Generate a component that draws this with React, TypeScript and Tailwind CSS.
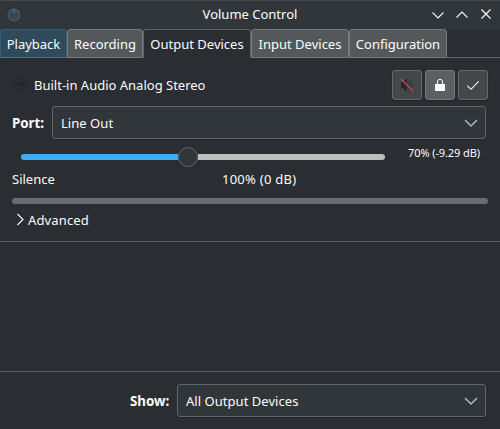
import type { ReactNode } from "react";

type TabKind = "hover" | "idle" | "active";

const tabStyles: Record<TabKind, string> = {
  hover: "bg-[#2f4a5a] border-[#336079] border-b-[#4f7486]",
  idle: "bg-[#54585b] border-[#777a7d]",
  active: "bg-[#2a2d32] border-[#5f6366] border-b-[#2a2d32]",
};

function Tab({ kind, width, children }: { kind: TabKind; width: string; children: ReactNode }) {
  return (
    <button
      className={`h-[29px] shrink-0 rounded-t-[3px] border text-center whitespace-nowrap ${width} ${tabStyles[kind]}`}
    >
      {children}
    </button>
  );
}

function ToolButton({ lit = false, children }: { lit?: boolean; children: ReactNode }) {
  return (
    <button
      className={`flex size-[30px] items-center justify-center rounded-[3px] border shadow-[0_1px_1px_rgba(0,0,0,0.25)] ${
        lit ? "border-[#74787a] bg-[#5c6063]" : "border-[#65696b] bg-[#43474a]"
      }`}
    >
      {children}
    </button>
  );
}

function Combo({ width, children }: { width: string; children: ReactNode }) {
  return (
    <div
      className={`flex h-[33px] items-center justify-between rounded-[3px] border border-[#616669] bg-[#31363a] pr-[7px] pl-2 shadow-[0_1px_1px_rgba(0,0,0,0.2)] ${width}`}
    >
      <span className="tracking-[0.04px]">{children}</span>
      <svg width="14" height="10" viewBox="0 0 14 10" fill="none" stroke="#b4b7b9" strokeWidth="1.5">
        <path d="M1 2l6 6 6-6" />
      </svg>
    </div>
  );
}

export default function App() {
  return (
    <div className="flex h-[429px] w-[500px] flex-col overflow-hidden bg-[#2a2d32] font-['Noto_Sans',sans-serif] text-[13px] leading-[18px] text-[#fcfcfc]">
      <header className="grid h-[29px] shrink-0 grid-cols-[1fr_auto_1fr] items-center border-t border-[#41484f] bg-[#31363b] pr-[8px] pl-[6px]">
        <svg className="-mt-px" width="16" height="16" viewBox="0 0 16 16">
          <circle cx="8" cy="8" r="7.7" fill="#262c33" />
          <circle cx="8" cy="8" r="6.7" fill="#4b5966" />
          <circle cx="8" cy="8.2" r="5.4" fill="#3a4651" />
          <path d="M8 2v4" stroke="#397da5" strokeWidth="1.2" />
        </svg>
        <h1 className="-mt-[2px] pl-[2px] font-normal">Volume Control</h1>
        <div className="flex justify-end gap-3">
          <svg width="12" height="12" viewBox="0 0 12 12" fill="none" stroke="#fcfcfc" strokeWidth="1.1">
            <path d="M.5 3.500L6 9l5.500-5.500" />
          </svg>
          <svg width="12" height="12" viewBox="0 0 12 12" fill="none" stroke="#fcfcfc" strokeWidth="1.1">
            <path d="M.5 8.500L6 3l5.500 5.500" />
          </svg>
          <svg className="-mt-px" width="12" height="12" viewBox="0 0 12 12" fill="none" stroke="#fcfcfc" strokeWidth="1.1">
            <path d="M1.500 1.500l9 9m0-9l-9 9" />
          </svg>
        </div>
      </header>

      <nav className="flex h-[29px] shrink-0">
        <Tab kind="hover" width="w-[67px]">Playback</Tab>
        <Tab kind="idle" width="w-[76px]">Recording</Tab>
        <Tab kind="active" width="w-[108px]">Output Devices</Tab>
        <Tab kind="idle" width="w-[98px]">Input Devices</Tab>
        <Tab kind="idle" width="w-[98px]">Configuration</Tab>
        <div className="flex-1 border-b border-[#616568]" />
      </nav>

      <main className="h-[184px] shrink-0 border-b border-[#5b5f62] px-3 pt-3">
        <div className="flex h-[30px] items-center">
          <svg width="16" height="16" viewBox="0 0 16 16" fill="none" stroke="#232629">
            <path d="M1.500 2.500h13v10h-13zM1.500 12v2" opacity=".7" />
            <path d="M3 7.500h4M5 5.500v4" />
            <path d="M10 4.500l3 3-3 3-3-3z" fill="#232629" stroke="none" />
          </svg>
          <span className="ml-[6px] flex-1">Built-in Audio Analog Stereo</span>
          <div className="flex gap-[3px]">
            <ToolButton>
              <svg width="16" height="16" viewBox="0 0 16 16" fill="none">
                <path d="M2 5h2l4-4v14l-4-4H2z" fill="#25282b" />
                <path d="M9 5.500q2 2.500 0 5M10 3q4 5 0 10" stroke="#2f3336" />
                <path d="M11.500 2q5 6 0 12" stroke="#3a3e41" />
                <path d="M2 2l12 12" stroke="#da4453" strokeWidth="1.3" />
              </svg>
            </ToolButton>
            <ToolButton lit>
              <svg width="16" height="16" viewBox="0 0 16 16" fill="none">
                <path d="M5.500 8V5a2.500 2.800 0 0 1 5 0v3" stroke="#fcfcfc" />
                <path d="M3 7h10v7H3z" fill="#fcfcfc" />
              </svg>
            </ToolButton>
            <ToolButton>
              <svg width="16" height="16" viewBox="0 0 16 16" fill="none" stroke="#fcfcfc" strokeWidth="1.1">
                <path d="M2.300 8.700L6 12.300l7.700-8" />
              </svg>
            </ToolButton>
          </div>
        </div>

        <div className="mt-[6px] flex items-center">
          <b className="w-10 text-[13.33px]">Port:</b>
          <Combo width="w-[434px]">Line Out</Combo>
        </div>

        <div className="mt-2 flex h-5 items-center pl-[9px]">
          <div className="flex w-[364px] items-center">
            <div className="h-[6px] w-[157px] rounded-l-[3px] bg-[#3daee9]" />
            <div className="size-5 rounded-full border border-[#626669] bg-[#31363b]" />
            <div className="h-[6px] flex-1 rounded-r-[3px] bg-[#bdbfbf]" />
          </div>
          <span className="-mt-[9px] ml-[23px] text-[11px] tracking-[-0.1px] whitespace-nowrap">70% (-9.29 dB)</span>
        </div>

        <div className="mt-[3px] flex">
          <span className="w-[210px]">Silence</span>
          <span className="tracking-[0.25px]">100% (0 dB)</span>
        </div>
        <div className="mt-[10px] h-[6px] rounded-full bg-[#696d6f]" />
        <div className="mt-[7px] flex items-center pl-1">
          <svg className="-mt-[2px]" width="9" height="13" viewBox="0 0 9 13" fill="none" stroke="#fcfcfc" strokeWidth="1.1">
            <path d="M1.500 1l5.500 5.500L1.500 12" />
          </svg>
          <span className="ml-[3px] tracking-[0.15px]">Advanced</span>
        </div>
      </main>

      <div className="flex-1" />

      <footer className="flex h-[58px] shrink-0 items-start border-t border-[#5b5f62] pt-3 pl-[130px]">
        <b className="mt-[8px] w-[47px] text-[13.33px]">Show:</b>
        <Combo width="w-[309px]">All Output Devices</Combo>
      </footer>
    </div>
  );
}
